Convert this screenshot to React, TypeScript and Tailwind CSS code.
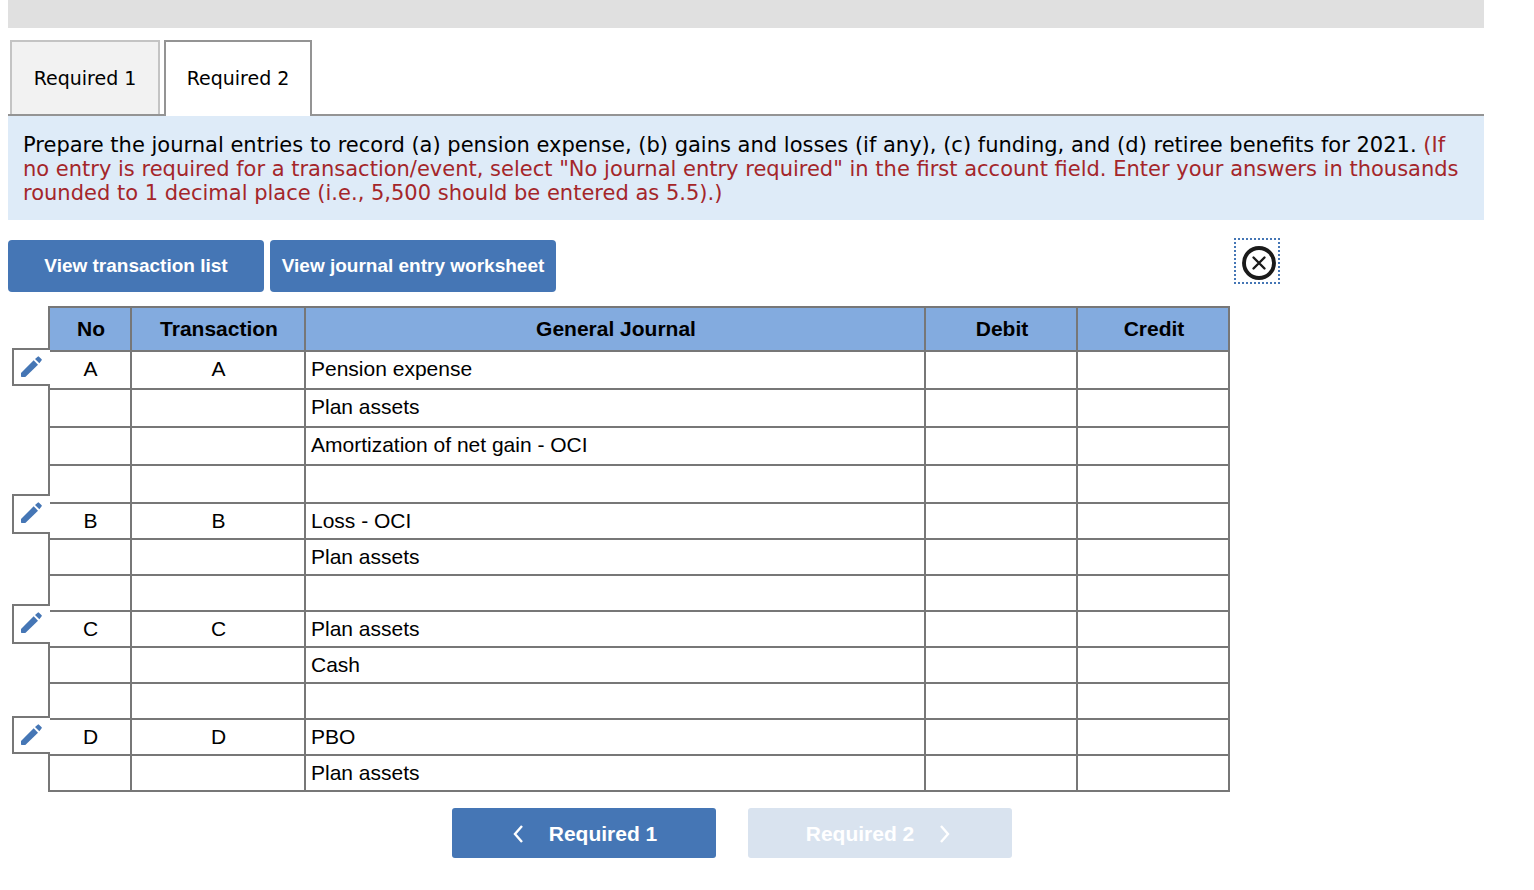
import { useState } from "react";
import clsx from "clsx";

const PencilIcon = () => (
  <svg width="21" height="21" viewBox="0 0 63 63" fill="#4576b5" aria-hidden="true">
    <path d="M0 61V51L38 13L51 26L13 63H2Q0 63 0 61Z" />
    <path d="M42 9L50 2Q52 0 54 2L62 10Q63 11 62 13L55 22Z" />
  </svg>
);

const CloseIcon = () => (
  <svg width="34" height="34" viewBox="0 0 34 34" fill="none" stroke="#1a1a1a" strokeLinecap="round" aria-hidden="true">
    <circle cx="17" cy="17" r="15" strokeWidth="3.9" />
    <path d="M11.5 11.5L22.5 22.5M22.5 11.5L11.5 22.5" strokeWidth="2.4" />
  </svg>
);

const Chevron = ({ d }: { d: string }) => (
  <svg width="10" height="18" viewBox="0 0 10 18" fill="none" stroke="currentColor" strokeWidth="2.4" aria-hidden="true">
    <path d={d} />
  </svg>
);

// One edit handle per entry, each as tall as the gap to the next entry
const handles = [
  { id: "A", size: "h-[38px] mb-[108px]" },
  { id: "B", size: "h-10 mb-[70px]" },
  { id: "C", size: "h-10 mb-[72px]" },
  { id: "D", size: "h-[38px]" },
];

const entries = [
  { id: "A", height: "h-[38px] *:pb-0.5", accounts: ["Pension expense", "Plan assets", "Amortization of net gain - OCI", ""] },
  { id: "B", height: "h-9", accounts: ["Loss - OCI", "Plan assets", ""] },
  { id: "C", height: "h-9", accounts: ["Plan assets", "Cash", ""] },
  { id: "D", height: "h-9", accounts: ["PBO", "Plan assets"] },
];

const tabs = ["Required 1", "Required 2"];

const cell = "border-r-2 border-b-2 border-[#777777]";
const actionButton = "h-[52px] rounded-[4px] bg-[#4576b5] text-[19px] font-bold text-white";
const navButton = "flex h-[50px] w-[264px] items-center justify-center gap-[26px] rounded-[3px] pt-0.5 text-[21px] font-bold text-white";

function JournalTable() {
  return (
    <table className="w-full min-w-0 max-w-[1182px] table-fixed border-separate border-spacing-0 border-t-2 border-l-2 border-[#777777] text-[21px] leading-6">
      <colgroup>
        <col className="w-[82px]" />
        <col className="w-[174px]" />
        <col />
        <col className="w-[152px]" />
        <col className="w-[152px]" />
      </colgroup>
      <thead>
        <tr className="h-11 bg-[#83abdf]">
          {["No", "Transaction", "General Journal", "Debit", "Credit"].map((h) => (
            <th key={h} scope="col" className={clsx(cell, "pl-0.5")}>{h}</th>
          ))}
        </tr>
      </thead>
      <tbody>
        {entries.map((entry) =>
          entry.accounts.map((account, i) => (
            <tr key={`${entry.id}-${i}`} className={entry.height}>
              <td className={clsx(cell, "pl-px text-center")}>{i === 0 ? entry.id : ""}</td>
              <td className={clsx(cell, "pl-px text-center")}>{i === 0 ? entry.id : ""}</td>
              <td className={clsx(cell, "pl-[5px]")}>{account}</td>
              <td className={cell}></td>
              <td className={cell}></td>
            </tr>
          ))
        )}
      </tbody>
    </table>
  );
}

export default function App() {
  const [active, setActive] = useState("Required 2");

  return (
    <main className="mr-[50px] ml-2 bg-white font-['Liberation_Sans',Arial,sans-serif] text-black">
      <div className="h-7 bg-[#e0e0e0]" />

      <div role="tablist" className="mt-3 flex gap-1 border-b-2 border-[#949494] pl-0.5 font-['DejaVu_Sans',Verdana,sans-serif] text-[19px]">
        {tabs.map((tab) => (
          <button
            key={tab}
            type="button"
            role="tab"
            aria-selected={tab === active}
            onClick={() => setActive(tab)}
            className={clsx(
              "border-2 border-b-0",
              tab === active
                ? "-mb-0.5 h-[76px] w-[148px] border-[#949494] bg-white pb-px"
                : "h-[74px] w-[150px] border-[#c4c4c4] bg-[#f2f2f2]"
            )}
          >
            {tab}
          </button>
        ))}
      </div>

      <p className="bg-[#deebf8] pt-[17px] pr-3 pb-[15px] pl-[15px] font-['DejaVu_Sans',Verdana,sans-serif] text-[21px] leading-6">
        Prepare the journal entries to record (a) pension expense, (b) gains and losses (if any), (c) funding, and (d) retiree benefits for 2021.{" "}
        <span className="text-[#a4262a]">
          (If no entry is required for a transaction/event, select "No journal entry required" in the first account field. Enter your answers in thousands rounded to 1 decimal place (i.e., 5,500 should be entered as 5.5).)
        </span>
      </p>

      <div className="mt-[18px] flex max-w-[1272px] items-start justify-between">
        <div className="flex gap-1.5 pt-0.5">
          <button type="button" className={clsx(actionButton, "w-64")}>View transaction list</button>
          <button type="button" className={clsx(actionButton, "w-[286px]")}>View journal entry worksheet</button>
        </div>
        <button
          type="button"
          aria-label="Close"
          className="flex size-[46px] items-center justify-center border-2 border-dotted border-[#4576b5] pt-1 pl-1"
        >
          <CloseIcon />
        </button>
      </div>

      <div className="mt-3.5 flex pl-1">
        <div className="z-10 -mr-0.5 flex w-[38px] shrink-0 flex-col pt-[42px]">
          {handles.map((handle) => (
            <button
              key={handle.id}
              type="button"
              aria-label={`Edit entry ${handle.id}`}
              className={clsx("flex shrink-0 items-start border-2 border-r-0 border-[#777777] bg-white pt-1.5 pl-[7px]", handle.size)}
            >
              <PencilIcon />
            </button>
          ))}
        </div>
        <JournalTable />
      </div>

      <nav className="mt-4 flex justify-center gap-8 pr-7">
        <button type="button" className={clsx(navButton, "bg-[#4576b5] pl-0.5")} onClick={() => setActive("Required 1")}>
          <Chevron d="M9 1L2 9L9 17" />
          Required 1
        </button>
        <button type="button" disabled className={clsx(navButton, "bg-[#d9e3ef] pr-1")}>
          Required 2
          <Chevron d="M1 1L8 9L1 17" />
        </button>
      </nav>
    </main>
  );
}
